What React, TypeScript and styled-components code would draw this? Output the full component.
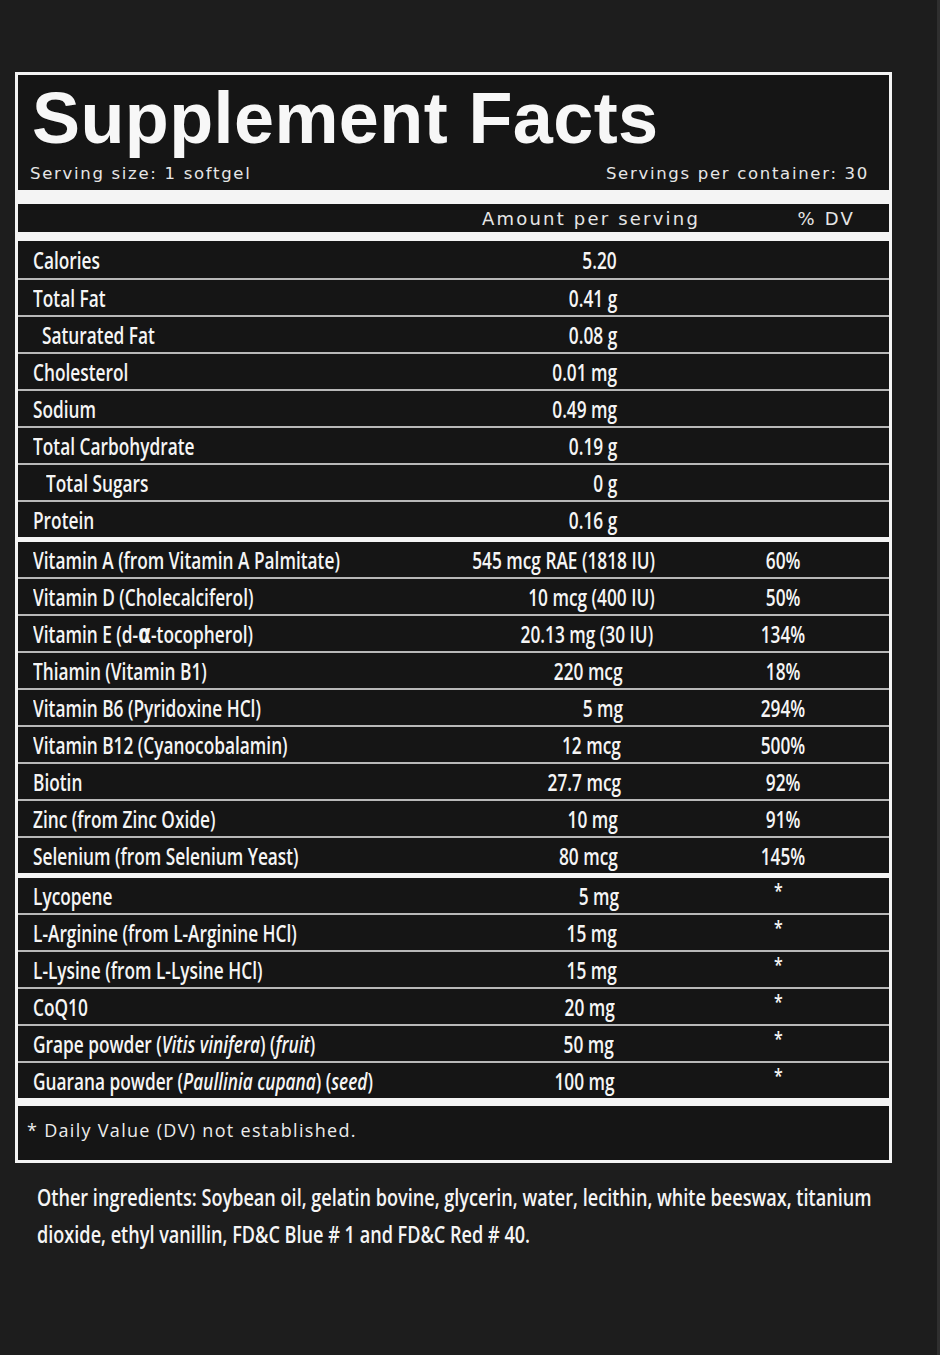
import styled, { createGlobalStyle, css } from "styled-components";

const GlobalStyle = createGlobalStyle`
  html, body {
    margin: 0;
    padding: 0;
    background: #1d1d1d;
  }
`;

const condensed = css`
  font-family: "Open Sans", "Noto Sans", sans-serif;
  font-weight: 600;
  font-size: 24px;
  color: #f5f5f5;
  display: inline-block;
  white-space: nowrap;
  transform: scaleX(0.72);
`;

const Page = styled.div`
  box-sizing: border-box;
  width: 940px;
  min-height: 1355px;
  padding: 72px 0 0 15px;
  border-right: 3px solid #2f2f2f;
  overflow: hidden;
`;

const Panel = styled.div`
  width: 877px;
  box-sizing: border-box;
  border: 3px solid #f4f4f4;
  background: #f4f4f4;
  display: flex;
  flex-direction: column;
`;

const Header = styled.div`
  background: #151515;
  height: 115px;
  box-sizing: border-box;
  padding: 7px 20px 0 12px;
  display: flex;
  flex-direction: column;
`;

const Title = styled.h1`
  margin: 0 0 0 2px;
  font-family: "Liberation Sans", Arial, sans-serif;
  font-weight: 700;
  font-size: 72px;
  line-height: 72px;
  color: #f7f7f7;
  letter-spacing: 0.4px;
`;

const ServingLine = styled.div`
  margin-top: 10px;
  display: flex;
  justify-content: space-between;
  font-family: "DejaVu Sans", sans-serif;
  font-size: 16.5px;
  line-height: 20px;
  letter-spacing: 1.7px;
  color: #e6e6e6;
`;

const ColumnHead = styled.div`
  margin-top: 14px;
  background: #151515;
  height: 28px;
  display: grid;
  grid-template-columns: minmax(0, 1fr) 240px 144px;
  align-items: center;
  padding: 0 34px 0 15px;
  font-family: "DejaVu Sans", sans-serif;
  font-size: 18px;
  letter-spacing: 2.2px;
  color: #e6e6e6;
`;

const HeadCell = styled.span<{ $align: string }>`
  text-align: ${(p) => p.$align};
  white-space: nowrap;
`;

const Table = styled.div`
  margin-top: 9px;
  background: #151515;
  display: flex;
  flex-direction: column;
`;

const Row = styled.div<{ $thick?: boolean; $first?: boolean }>`
  box-sizing: border-box;
  height: ${(p) => (p.$thick ? 40 : 37)}px;
  border-top: ${(p) =>
    p.$first ? "none" : p.$thick ? "5px solid #f4f4f4" : "2px solid #b8b8b8"};
  display: grid;
  grid-template-columns: minmax(0, 1fr) 240px 144px;
  align-items: center;
  padding: 0 34px 0 15px;
`;

const LabelCell = styled.div<{ $indent: number }>`
  min-width: 0;
  padding-left: ${(p) => p.$indent}px;
`;

const Label = styled.span`
  ${condensed};
  transform-origin: left center;
`;

const AmountCell = styled.div<{ $pad: number }>`
  display: flex;
  justify-content: flex-end;
  padding-right: ${(p) => p.$pad}px;
`;

const Amount = styled.span`
  ${condensed};
  transform-origin: right center;
`;

const DvCell = styled.div`
  display: flex;
  justify-content: center;
`;

const Dv = styled.span<{ $star?: boolean }>`
  ${condensed};
  transform-origin: center center;
  ${(p) =>
    p.$star &&
    css`
      font-size: 20px;
      transform: translate(-5px, -5px) scaleX(0.8);
    `}
`;

const Alpha = styled.span`
  font-family: "DejaVu Sans", sans-serif;
  font-weight: 700;
  font-size: 26px;
`;

const Footer = styled.div`
  margin-top: 8px;
  background: #151515;
  height: 54px;
  box-sizing: border-box;
  padding: 12px 0 0 9px;
  font-family: "Open Sans", "Noto Sans", sans-serif;
  font-size: 18px;
  line-height: 24px;
  letter-spacing: 1.3px;
  color: #ededed;
`;

const Ingredients = styled.p`
  margin: 15px 0 0 22px;
`;

const IngredientText = styled.span`
  ${condensed};
  line-height: 37px;
  transform: scaleX(0.754);
  transform-origin: left top;
`;

type Item = {
  label: React.ReactNode;
  amount: string;
  dv?: string;
  indent?: number;
  end?: number;
  thick?: boolean;
};

const items: Item[] = [
  { label: "Calories", amount: "5.20" },
  { label: "Total Fat", amount: "0.41 g" },
  { label: "Saturated Fat", amount: "0.08 g", indent: 9 },
  { label: "Cholesterol", amount: "0.01 mg" },
  { label: "Sodium", amount: "0.49 mg" },
  { label: "Total Carbohydrate", amount: "0.19 g" },
  { label: "Total Sugars", amount: "0 g", indent: 13 },
  { label: "Protein", amount: "0.16 g" },
  { label: "Vitamin A (from Vitamin A Palmitate)", amount: "545 mcg RAE (1818 IU)", dv: "60%", end: 654, thick: true },
  { label: "Vitamin D (Cholecalciferol)", amount: "10 mcg (400 IU)", dv: "50%", end: 654 },
  {
    label: (
      <>
        Vitamin E (d-<Alpha>α</Alpha>-tocopherol)
      </>
    ),
    amount: "20.13 mg (30 IU)",
    dv: "134%",
    end: 652,
  },
  { label: "Thiamin (Vitamin B1)", amount: "220 mcg", dv: "18%", end: 622 },
  { label: "Vitamin B6 (Pyridoxine HCl)", amount: "5 mg", dv: "294%", end: 622 },
  { label: "Vitamin B12 (Cyanocobalamin)", amount: "12 mcg", dv: "500%", end: 620 },
  { label: "Biotin", amount: "27.7 mcg", dv: "92%", end: 620 },
  { label: "Zinc (from Zinc Oxide)", amount: "10 mg", dv: "91%", end: 617 },
  { label: "Selenium (from Selenium Yeast)", amount: "80 mcg", dv: "145%", end: 617 },
  { label: "Lycopene", amount: "5 mg", dv: "*", end: 618, thick: true },
  { label: "L-Arginine (from L-Arginine HCl)", amount: "15 mg", dv: "*" },
  { label: "L-Lysine (from L-Lysine HCl)", amount: "15 mg", dv: "*" },
  { label: "CoQ10", amount: "20 mg", dv: "*", end: 614 },
  {
    label: (
      <>
        Grape powder (<i>Vitis vinifera</i>) (<i>fruit</i>)
      </>
    ),
    amount: "50 mg",
    dv: "*",
    end: 613,
  },
  {
    label: (
      <>
        Guarana powder (<i>Paullinia cupana</i>) (<i>seed</i>)
      </>
    ),
    amount: "100 mg",
    dv: "*",
    end: 614,
  },
];

// amount column runs from x=470 to x=710
const AMOUNT_RIGHT = 710;

export default function App() {
  return (
    <Page>
      <GlobalStyle />
      <Panel>
        <Header>
          <Title>Supplement Facts</Title>
          <ServingLine>
            <span>Serving size: 1 softgel</span>
            <span>Servings per container: 30</span>
          </ServingLine>
        </Header>
        <ColumnHead>
          <span />
          <HeadCell $align="center">Amount per serving</HeadCell>
          <HeadCell $align="right">% DV</HeadCell>
        </ColumnHead>
        <Table>
          {items.map((item, i) => (
            <Row key={i} $first={i === 0} $thick={item.thick}>
              <LabelCell $indent={item.indent ?? 0}>
                <Label>{item.label}</Label>
              </LabelCell>
              <AmountCell $pad={AMOUNT_RIGHT - (item.end ?? 616)}>
                <Amount>{item.amount}</Amount>
              </AmountCell>
              <DvCell>
                {item.dv && <Dv $star={item.dv === "*"}>{item.dv}</Dv>}
              </DvCell>
            </Row>
          ))}
        </Table>
        <Footer>* Daily Value (DV) not established.</Footer>
      </Panel>
      <Ingredients>
        <IngredientText>
          Other ingredients: Soybean oil, gelatin bovine, glycerin, water, lecithin, white beeswax, titanium
          <br />
          dioxide, ethyl vanillin, FD&amp;C Blue # 1 and FD&amp;C Red # 40.
        </IngredientText>
      </Ingredients>
    </Page>
  );
}
